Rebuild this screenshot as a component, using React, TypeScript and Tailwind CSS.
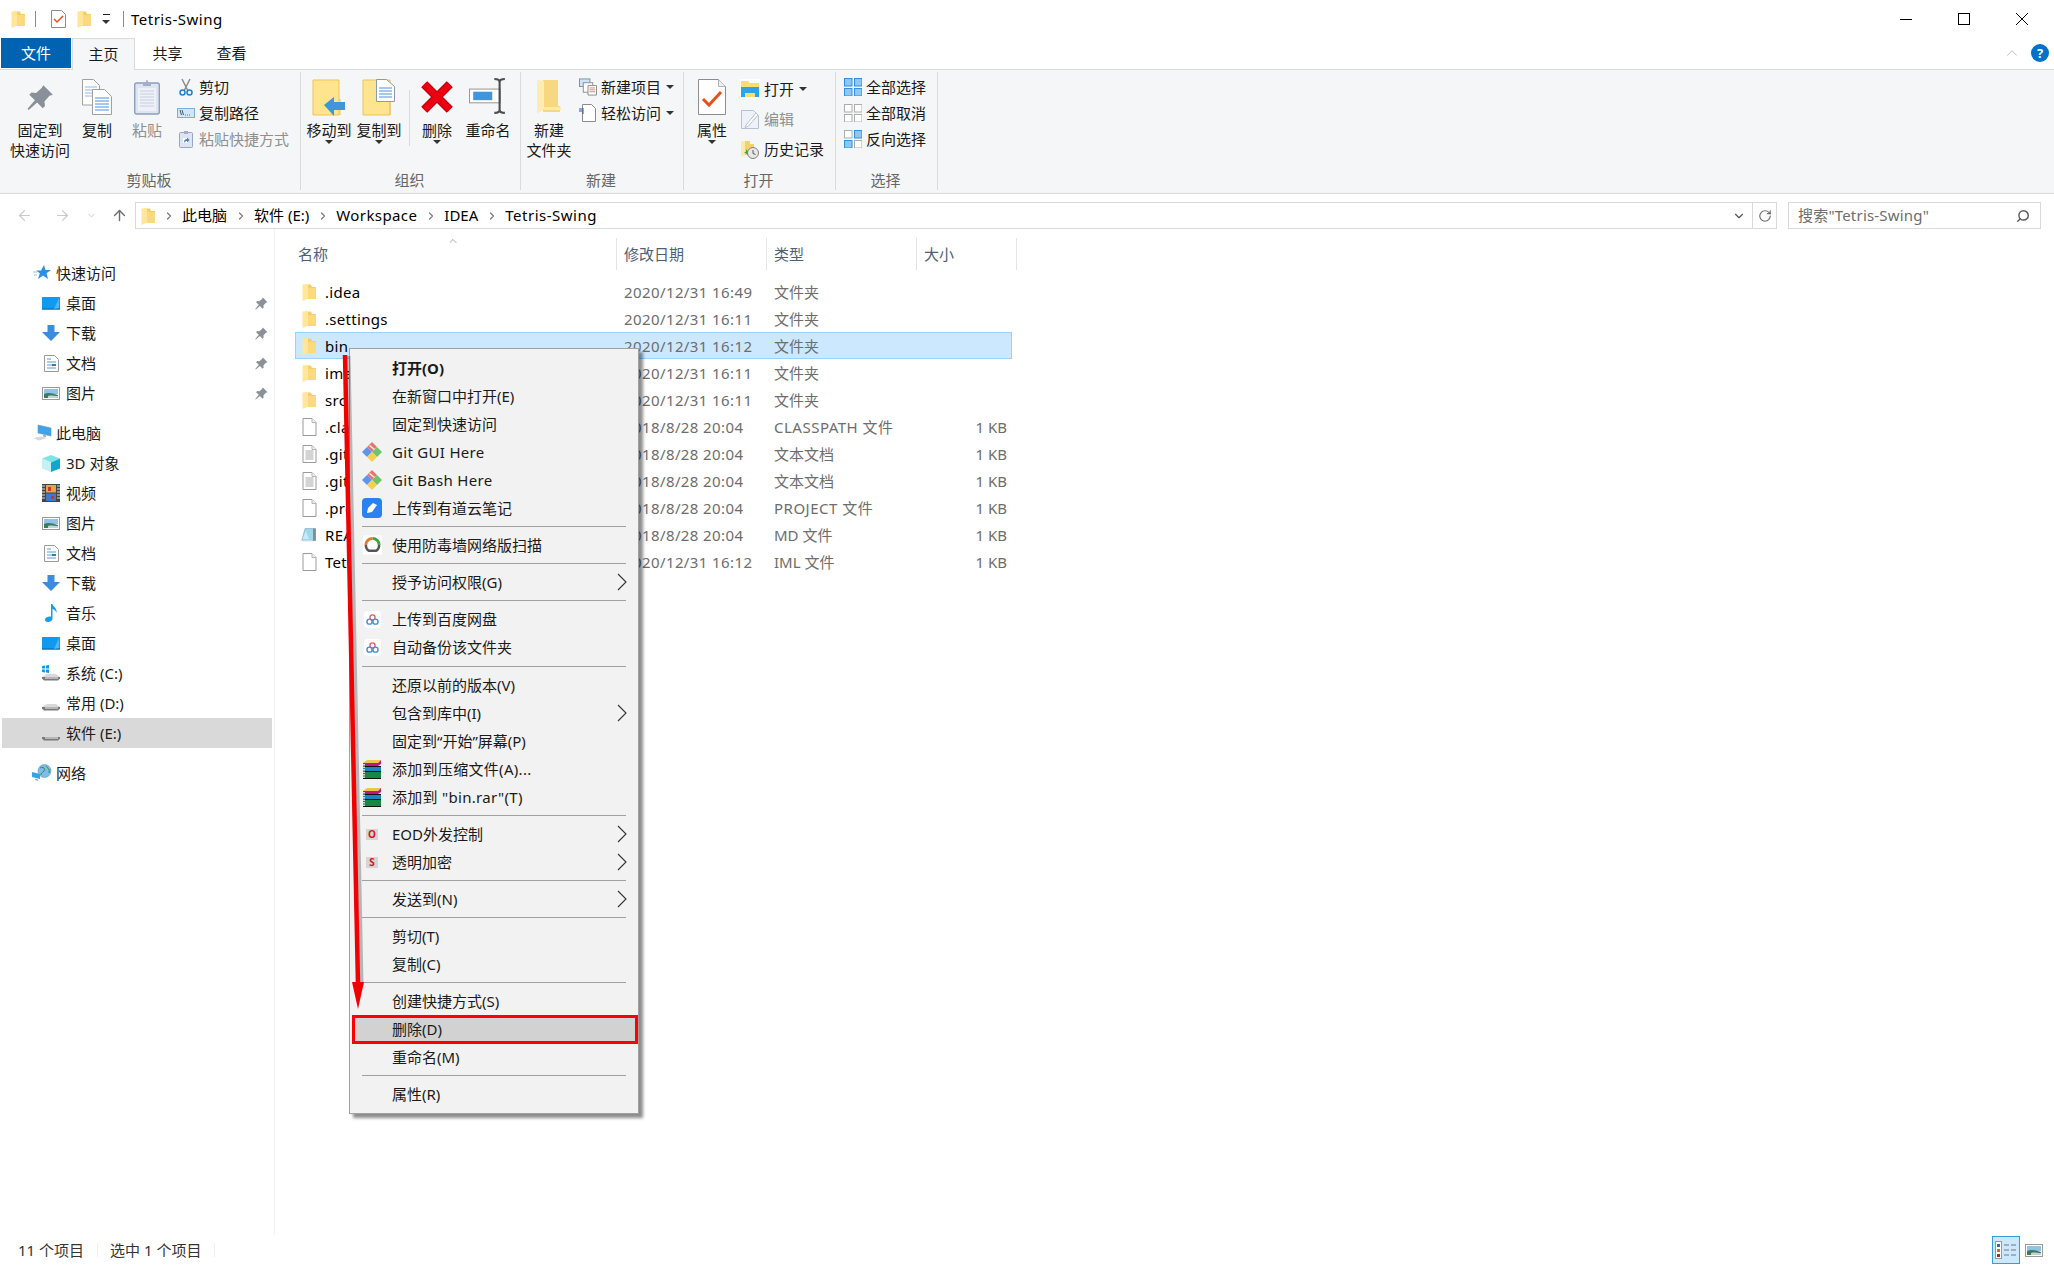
import { ChevronDown, ChevronRight, ChevronUp, RotateCw, ArrowLeft, ArrowRight, ArrowUp, Search } from "lucide-react";
import type { ReactNode } from "react";

// small shell icons, drawn by hand
function FolderS({ className = "w-[14px] h-[18px]" }: { className?: string }) {
  return (
    <svg viewBox="0 0 14 18" className={className}>
      <path d="M3 1.500h6l1 2.500h4v12H3z" fill="#f8cf66" />
      <path d="M.5 1.500 6 1v14.500l-5.500 2.500z" fill="#ffe69a" />
      <path d="M6 5h8v11H6z" fill="#fbd97e" />
    </svg>
  );
}
function DocBlank({ lines = false }: { lines?: boolean }) {
  return (
    <svg viewBox="0 0 14 18" className="w-[15px] h-[18px]">
      <path d="M.5.5h9l4 4v13H.5z" fill="#fff" stroke="#9a9a9a" />
      <path d="M9.5.5v4h4" fill="#f0f0f0" stroke="#b5b5b5" />
      {lines && <path d="M3 6h8M3 8h8M3 10h8M3 12h8M3 14h8" stroke="#a8a8a8" />}
    </svg>
  );
}
function NoteIcon() {
  return (
    <svg viewBox="0 0 20 18" className="w-[20px] h-[18px]">
      <path d="M5 1h13v15H1z" fill="#9ed8ea" stroke="#6f9db0" strokeWidth=".7" />
      <path d="M15 1h3.500v15H15z" fill="#7f8f99" />
      <path d="M1 15.500h13l1 1.500H2z" fill="#d5e9ef" />
      <path d="M6 4 2 14h8z" fill="#c8ecf5" />
    </svg>
  );
}
function Pin({ className = "w-[13px] h-[13px]", fill = "#8a9098" }: { className?: string; fill?: string }) {
  return (
    <svg viewBox="0 0 24 24" className={className}>
      <path d="M14.5 1 23 9.5l-3 1-4.5 5 .5 4-2 2-5-5-7.500 6.500-1-1L7 14.500l-5-5 2-2 4 .5 5-4.500z" fill={fill} />
    </svg>
  );
}
function Caret() {
  return (
    <svg viewBox="0 0 8 4" className="w-[8px] h-[4px]">
      <path d="M0 0h8L4 4z" fill="#333" />
    </svg>
  );
}
function CopyIcon() {
  return (
    <svg viewBox="0 0 30 36" className="w-[30px] h-[36px]">
      <path d="M.5.5h11l6 6V26H.5z" fill="#fff" stroke="#a0a0a0" />
      <path d="M3 8h12M3 11h12M3 14h12M3 17h12" stroke="#8fb8ea" />
      <path d="M10.500 10.500h12l7 7v18h-19z" fill="#fff" stroke="#a0a0a0" />
      <path d="M13 19h14M13 22h14M13 25h14M13 28h14M13 31h14" stroke="#4a90e2" />
    </svg>
  );
}
function PasteIcon() {
  return (
    <svg viewBox="0 0 26 36" className="w-[26px] h-[36px]">
      <rect x=".7" y="4" width="24.600" height="31" rx="2" fill="#dfe5f0" stroke="#8e9dbb" strokeWidth="1.400" />
      <path d="M4 9h18v23H4z" fill="#eef1f7" />
      <path d="M6 12h14M6 15h14M6 18h14M6 21h14M6 24h14M6 27h14" stroke="#c6cfe0" />
      <path d="M9 4h2.500l1-3h1l1 3H17v3H9z" fill="#a4afc6" />
    </svg>
  );
}
function ScissorsIcon() {
  return (
    <svg viewBox="0 0 14 18" className="w-[14px] h-[18px]">
      <path d="M3 1l5.500 11M11 1 5.500 12" stroke="#8c8c8c" strokeWidth="1.500" fill="none" />
      <circle cx="3.500" cy="14.500" r="2.500" fill="none" stroke="#2a7fc9" strokeWidth="1.500" />
      <circle cx="10.500" cy="14.500" r="2.500" fill="none" stroke="#2a7fc9" strokeWidth="1.500" />
    </svg>
  );
}
function PathIcon() {
  return (
    <svg viewBox="0 0 18 10" className="w-[18px] h-[10px]">
      <rect x=".5" y=".5" width="17" height="9" fill="#cfe6fb" stroke="#7aaee0" />
      <path d="M3 2l1.500 5M5 2l1.500 5M8 7h.8M10 7h.8M12 7h.8" stroke="#234" strokeWidth=".8" />
    </svg>
  );
}
function ShortcutIcon() {
  return (
    <svg viewBox="0 0 14 18" className="w-[14px] h-[18px]">
      <rect x=".5" y="2.500" width="13" height="15" rx="1" fill="#dfe5f0" stroke="#98a6c0" />
      <path d="M5 1h4v3H5z" fill="#a4afc6" />
      <path d="M4 8h5v5H4z" fill="#fff" />
      <path d="M5 13c0-3 1-4 3-4V7.500l2.500 2.500L8 12.500V11c-1 0-2 .5-3 2z" fill="#4a7fc0" />
    </svg>
  );
}
function MoveToIcon() {
  return (
    <svg viewBox="0 0 34 37" className="w-[34px] h-[37px]">
      <path d="M1 1h26v35H1z" fill="#ffe48f" stroke="#eec355" />
      <path d="M28 20v16" stroke="#eec355" />
      <path d="M12 26 22 18v5h11v8H22v6z" fill="#3f95de" />
    </svg>
  );
}
function CopyToIcon() {
  return (
    <svg viewBox="0 0 34 37" className="w-[34px] h-[37px]">
      <path d="M1 1h27v35H1z" fill="#ffe48f" stroke="#eec355" />
      <path d="M24 22c3 0 4 1 4 3v11" fill="none" stroke="#eec355" />
      <path d="M14.500.5h10l8 7v15h-18z" fill="#fff" stroke="#8a9aae" />
      <path d="M17 9h13M17 12h13M17 15h13M17 18h13" stroke="#4a90e2" />
    </svg>
  );
}
function DeleteIcon() {
  return (
    <svg viewBox="0 0 32 32" className="w-[34px] h-[34px]">
      <path d="M4 4 28 28M28 4 4 28" stroke="#b8000c" strokeWidth="8" />
      <path d="M4 4 28 28M28 4 4 28" stroke="#ea0011" strokeWidth="6" />
    </svg>
  );
}
function RenameIcon() {
  return (
    <svg viewBox="0 0 36 36" className="w-[38px] h-[38px]">
      <rect x=".5" y="10.500" width="29" height="13" fill="#fff" stroke="#9a9a9a" />
      <rect x="4" y="13" width="18" height="8" fill="#3f95de" />
      <path d="M24 1c4 0 5 2 5 3v26c0 1 1 3 5 3M34 1c-4 0-5 2-5 3M29 30c0 1-1 3-5 3" fill="none" stroke="#4d4d4d" strokeWidth="2" />
    </svg>
  );
}
function NewFolderIcon() {
  return (
    <svg viewBox="0 0 24 36" className="w-[24px] h-[36px]">
      <path d="M6 1h15v26h2v6H6z" fill="#f7d77f" />
      <path d="M0 1l7 1v28l-7 5z" fill="#ffecb0" />
      <path d="M7 28h17v3H7z" fill="#fde9a9" />
    </svg>
  );
}
function NewItemIcon() {
  return (
    <svg viewBox="0 0 19 18" className="w-[19px] h-[18px]">
      <rect x=".5" y=".5" width="11" height="8" fill="#cfe3f8" stroke="#7d8ea3" />
      <rect x="4.500" y="4.500" width="10" height="10" fill="#fff" stroke="#8a8a8a" />
      <path d="M9.500 7.500h9v10h-9z" fill="#fff" stroke="#8a8a8a" />
      <path d="M11 10h6M11 12h6M11 14h6" stroke="#c06a6a" strokeWidth=".8" />
    </svg>
  );
}
function EasyIcon() {
  return (
    <svg viewBox="0 0 18 18" className="w-[18px] h-[18px]">
      <path d="M3.500.5h9l4 4v13h-13z" fill="#fff" stroke="#8a8a8a" />
      <path d="M0 5h5M0 7h5M3 9h2" stroke="#1f5fa8" />
    </svg>
  );
}
function PropsIcon() {
  return (
    <svg viewBox="0 0 28 36" className="w-[28px] h-[36px]">
      <path d="M.5.5h20l7 7v28H.5z" fill="#fff" stroke="#8c8c8c" />
      <path d="M20.500.5v7h7" fill="#eee" stroke="#b0b0b0" />
      <path d="M5 20l6 6L23 13" fill="none" stroke="#e8501b" strokeWidth="3" />
    </svg>
  );
}
function OpenIcon() {
  return (
    <svg viewBox="0 0 20 20" className="w-[20px] h-[20px]">
      <rect width="20" height="20" fill="#fff" />
      <path d="M1 2h7l2 2h9v14H1z" fill="#ffdc6e" />
      <path d="M1 8h18v10h-4v-4H5v4H1z" fill="#2fa3ea" />
    </svg>
  );
}
function EditIcon() {
  return (
    <svg viewBox="0 0 18 19" className="w-[18px] h-[19px]">
      <path d="M.5.500h12l5 5v13H.5z" fill="#eef1f7" stroke="#b4c0d6" />
      <path d="M5 15 15 3l2 2L7 16.500l-3 1z" fill="#fff" stroke="#b4c0d6" />
    </svg>
  );
}
function HistoryIcon() {
  return (
    <svg viewBox="0 0 18 19" className="w-[18px] h-[19px]">
      <path d="M3 1h6v3h4v11H3z" fill="#f5d06f" />
      <path d="M0 1.500 4 1v14l-4 2z" fill="#ffe9a6" />
      <circle cx="12" cy="13" r="5.500" fill="#e8e8e8" stroke="#808080" />
      <path d="M12 10v3.500l2.500 1" stroke="#555" fill="none" />
      <path d="M5 9l2 3h-1l1 3-4-3h2z" fill="#3aa63a" />
    </svg>
  );
}
function GridIcon({ cells }: { cells: boolean[] }) {
  return (
    <svg viewBox="0 0 18 18" className="w-[18px] h-[18px]">
      {[[0, 0], [10, 0], [0, 10], [10, 10]].map(([x, y], i) => (
        <rect key={i} x={x + 0.5} y={y + 0.5} width="7.500" height="7.500" fill={cells[i] ? "#8ec8f2" : "#fff"} stroke={cells[i] ? "#2f8fe0" : "#adadad"} />
      ))}
    </svg>
  );
}
function StarIcon() {
  return (
    <svg viewBox="0 0 18 16" className="w-[18px] h-[16px]">
      <path d="M11 0l1.500 5H18l-4.500 3.200L15 14l-5-3.500L5 14l1.800-5.800L3 5.500h5z" fill="#2a8fe6" />
      <path d="M0 7h4M1 10h3" stroke="#9cc6ec" />
    </svg>
  );
}
function DesktopIcon() {
  return (
    <svg viewBox="0 0 18 13" className="w-[18px] h-[13px]">
      <rect width="18" height="12.500" rx=".5" fill="#0f9aef" />
      <path d="M0 11.500h18v1H0z" fill="#0d5fa8" />
      <path d="M12 12 17 1v10z" fill="#4db8f7" />
    </svg>
  );
}
function DownIcon() {
  return (
    <svg viewBox="0 0 18 16" className="w-[18px] h-[16px]">
      <path d="M5.500 0h7v7H18l-9 9-9-9h5.500z" fill="#3b8be0" />
    </svg>
  );
}
function DocsIcon() {
  return (
    <svg viewBox="0 0 15 17" className="w-[15px] h-[17px]">
      <path d="M.5.500h10l4 4v12H.5z" fill="#fff" stroke="#9a9a9a" />
      <path d="M3 4h4M3 7h9M3 10h9M3 13h9" stroke="#5a9ad6" />
      <path d="M8 9h4v2H8z" fill="#2f7f9f" />
    </svg>
  );
}
function PictureIcon({ className = "w-[18px] h-[13px]" }: { className?: string }) {
  return (
    <svg viewBox="0 0 18 13" className={className}>
      <rect x=".5" y=".5" width="17" height="12" fill="#fff" stroke="#9a9a9a" />
      <path d="M2 2h14v5H2z" fill="#8fc3ea" />
      <path d="M2 7c4-2 8-1 14 1v3H2z" fill="#3f7a5f" />
      <path d="M6 9c3-1 6 0 10 0v2H6z" fill="#bcd6d6" />
    </svg>
  );
}
function PcIcon() {
  return (
    <svg viewBox="0 0 20 18" className="w-[20px] h-[18px]">
      <path d="M6 1l13 3v8L6 9z" fill="#3ea3e8" stroke="#6a93b8" strokeWidth=".6" />
      <path d="M11 10.500l3 .8v2l-3-.8z" fill="#9ab4c8" />
      <path d="M1 14l8-1.500 6 1.500-8 2.500z" fill="#d6d9dc" />
    </svg>
  );
}
function CubeIcon() {
  return (
    <svg viewBox="0 0 18 17" className="w-[18px] h-[17px]">
      <path d="M9 0l9 3.500-9 4-9-4z" fill="#7fe3e6" />
      <path d="M0 3.500l9 4V17l-9-3.500z" fill="#c6f1f2" />
      <path d="M18 3.500l-9 4V17l9-3.500z" fill="#14a5cf" />
    </svg>
  );
}
function FilmIcon() {
  return (
    <svg viewBox="0 0 18 18" className="w-[18px] h-[18px]">
      <rect width="18" height="18" fill="#444" />
      <path d="M0 2h3M0 5h3M0 8h3M0 11h3M0 14h3M15 2h3M15 5h3M15 8h3M15 11h3M15 14h3" stroke="#ddd" />
      <path d="M4 1h10v7.500H4z" fill="#e6a34a" />
      <path d="M4 9.500h10V17H4z" fill="#3b78d8" />
      <path d="M6 3h3v4H6zM9 12h3v3H9z" fill="#c0392b" />
    </svg>
  );
}
function NoteMusic() {
  return (
    <svg viewBox="0 0 13 18" className="w-[13px] h-[18px]">
      <path d="M6 0h1.500c.5 3 5 4 4 9-.5-2-2-3.500-4-4v9.500C7.500 16.500 5.500 18 3 18s-3-1.500-3-2.500C0 13.500 3 12 6 12.500z" fill="#12a0ee" />
    </svg>
  );
}
function DriveIcon({ win = false }: { win?: boolean }) {
  return (
    <svg viewBox="0 0 20 16" className="w-[20px] h-[16px]">
      <path d="M1 12l5-3h9l4 3-2 3H3z" fill="#d9d9d9" />
      <path d="M1 12h18v1.500L17 15.500H3l-2-2z" fill="#7a7a7a" />
      <path d="M4 12.500h13v1H4z" fill="#f3f3f3" />
      {win && <path d="M1 1l3-.5v3H1zM5 .4l3-.4v3.500H5zM1 4.500h3v3l-3-.5zM5 4.500h3V8l-3-.4z" fill="#0f9aef" />}
    </svg>
  );
}
function NetIcon() {
  return (
    <svg viewBox="0 0 20 18" className="w-[20px] h-[18px]">
      <circle cx="12.500" cy="7" r="6.500" fill="#7fbde8" stroke="#5e96c4" strokeWidth=".6" />
      <path d="M8 4c3-2 6 1 4 3s-3 2-3 4M14 2c2 2 4 4 3 7" stroke="#2e8b57" fill="none" />
      <path d="M0 8l8 2v5l-8-2z" fill="#36a3e8" />
      <path d="M3 14.500l3 1v1.500l-3-1z" fill="#98b0c4" />
    </svg>
  );
}
function GitIcon() {
  return (
    <svg viewBox="0 0 20 20" className="w-[20px] h-[20px]">
      <path d="M10 0l5 5-5 5-5-5z" fill="#e8746c" />
      <path d="M5 5l5 5-5 5-5-5z" fill="#5b95ec" />
      <path d="M15 5l5 5-5 5-5-5z" fill="#6cc56c" />
      <path d="M10 10l5 5-5 5-5-5z" fill="#f5d050" />
      <path d="M8 3l5 4-1 1-5-4z" fill="#eee" />
    </svg>
  );
}
function YoudaoIcon() {
  return (
    <svg viewBox="0 0 20 20" className="w-[20px] h-[20px]">
      <rect width="20" height="20" rx="4" fill="#2b80f2" />
      <path d="M11 5l4 2-5 7-5 1 1-5z" fill="#fff" />
    </svg>
  );
}
function AvIcon() {
  return (
    <svg viewBox="0 0 20 20" className="w-[19px] h-[20px]">
      <rect width="20" height="20" fill="#fff" />
      <path d="M10 3a7 7 0 0 1 7 7" fill="none" stroke="#3aa63a" strokeWidth="3" />
      <path d="M3 10a7 7 0 0 1 7-7" fill="none" stroke="#e87a2a" strokeWidth="3" />
      <path d="M3 10a7 7 0 0 0 3 6h8a7 7 0 0 0 3-6" fill="none" stroke="#555" strokeWidth="2.500" />
    </svg>
  );
}
function BaiduIcon() {
  return (
    <svg viewBox="0 0 20 20" className="w-[17px] h-[17px]">
      <rect width="20" height="20" rx="4" fill="#fff" />
      <circle cx="10" cy="7.500" r="3" fill="none" stroke="#e0606a" strokeWidth="1.600" />
      <circle cx="6.500" cy="12.500" r="3" fill="none" stroke="#3a8ee8" strokeWidth="1.600" />
      <circle cx="13.500" cy="12.500" r="3" fill="none" stroke="#3a8ee8" strokeWidth="1.600" />
    </svg>
  );
}
function RarIcon() {
  return (
    <svg viewBox="0 0 20 20" className="w-[20px] h-[20px]">
      <path d="M1 4l4-3h14l-3 3z" fill="#e6c84a" />
      <path d="M1 4h15l3-3v4l-3 2H1z" fill="#c2148a" />
      <path d="M1 8h18v4H1z" fill="#1a86bd" />
      <path d="M1 13h18v6H1z" fill="#138a44" />
      <path d="M1 7.500h18M1 12.500h18M1 19.500h18" stroke="#111" />
      <path d="M2 5v14" stroke="#d4d4d4" strokeWidth="2" strokeDasharray="1.500 1" />
    </svg>
  );
}
function LetterIcon({ c }: { c: string }) {
  return <span className="flex h-[11px] w-[12px] items-center justify-center bg-[#d5d5d5] text-[10px] font-bold leading-none text-[#d8141b]">{c}</span>;
}
function SubArrow() {
  return (
    <svg viewBox="0 0 10 18" className="ml-auto mr-[6px] h-[18px] w-[10px]">
      <path d="M1 1l8 8-8 8" fill="none" stroke="#333" strokeWidth="1.100" />
    </svg>
  );
}

function Big({ w, ml = 0, gray, caret, icon, lines }: { w: number; ml?: number; gray?: boolean; caret?: boolean; icon: ReactNode; lines: string[] }) {
  return (
    <div className={"flex shrink-0 flex-col items-center leading-[20px] " + (gray ? "text-[#8f8f8f]" : "text-[#1a1a1a]")} style={{ width: w, marginLeft: ml }}>
      <div className="flex h-[46px] items-center justify-center">{icon}</div>
      {lines.map((l) => (
        <span key={l} className="whitespace-nowrap">{l}</span>
      ))}
      {caret && <span className="flex h-[4px] items-center"><Caret /></span>}
    </div>
  );
}
function Small({ icon, label, gray, caret, h = "h-[26px]", iw = "w-[18px]" }: { icon: ReactNode; label: string; gray?: boolean; caret?: boolean; h?: string; iw?: string }) {
  return (
    <div className={"flex items-center gap-[4px] whitespace-nowrap " + h + " " + (gray ? "text-[#8f8f8f]" : "text-[#1a1a1a]")}>
      <span className={"flex justify-center " + iw}>{icon}</span>
      <span>{label}</span>
      {caret && <span className="ml-[1px]"><Caret /></span>}
    </div>
  );
}
function Group({ width, label, children }: { width: number; label: string; children: ReactNode }) {
  return (
    <div className="flex h-[118px] shrink-0 flex-col border-r border-[#dadbdc] pt-[2px]" style={{ width }}>
      <div className="flex h-[96px]">{children}</div>
      <div className="flex h-[19px] items-center justify-center pr-[2px] text-[#666]">{label}</div>
    </div>
  );
}

const nav: { label: string; icon?: ReactNode; head?: boolean; pin?: boolean; active?: boolean; gap?: boolean }[] = [
  { label: "快速访问", icon: <StarIcon />, head: true },
  { label: "桌面", icon: <DesktopIcon />, pin: true },
  { label: "下载", icon: <DownIcon />, pin: true },
  { label: "文档", icon: <DocsIcon />, pin: true },
  { label: "图片", icon: <PictureIcon />, pin: true },
  { label: "此电脑", icon: <PcIcon />, head: true, gap: true },
  { label: "3D 对象", icon: <CubeIcon /> },
  { label: "视频", icon: <FilmIcon /> },
  { label: "图片", icon: <PictureIcon /> },
  { label: "文档", icon: <DocsIcon /> },
  { label: "下载", icon: <DownIcon /> },
  { label: "音乐", icon: <NoteMusic /> },
  { label: "桌面", icon: <DesktopIcon /> },
  { label: "系统 (C:)", icon: <DriveIcon win /> },
  { label: "常用 (D:)", icon: <DriveIcon /> },
  { label: "软件 (E:)", icon: <DriveIcon />, active: true },
  { label: "网络", icon: <NetIcon />, head: true, gap: true },
];

const files = [
  { name: ".idea", date: "2020/12/31 16:49", type: "文件夹", icon: <FolderS /> },
  { name: ".settings", date: "2020/12/31 16:11", type: "文件夹", icon: <FolderS /> },
  { name: "bin", date: "2020/12/31 16:12", type: "文件夹", icon: <FolderS />, sel: true },
  { name: "images", date: "2020/12/31 16:11", type: "文件夹", icon: <FolderS /> },
  { name: "src", date: "2020/12/31 16:11", type: "文件夹", icon: <FolderS /> },
  { name: ".classpath", date: "2018/8/28 20:04", type: "CLASSPATH 文件", size: "1 KB", icon: <DocBlank />, wide: true },
  { name: ".gitattributes", date: "2018/8/28 20:04", type: "文本文档", size: "1 KB", icon: <DocBlank lines /> },
  { name: ".gitignore", date: "2018/8/28 20:04", type: "文本文档", size: "1 KB", icon: <DocBlank lines /> },
  { name: ".project", date: "2018/8/28 20:04", type: "PROJECT 文件", size: "1 KB", icon: <DocBlank />, wide: true },
  { name: "README.md", date: "2018/8/28 20:04", type: "MD 文件", size: "1 KB", icon: <NoteIcon /> },
  { name: "Tetris-Swing.iml", date: "2020/12/31 16:12", type: "IML 文件", size: "1 KB", icon: <DocBlank /> },
];

type MenuRow = { label?: string; icon?: ReactNode; sub?: boolean; bold?: boolean; hot?: boolean; wide?: boolean; tall?: boolean };
const menu: MenuRow[] = [
  { label: "打开(O)", bold: true },
  { label: "在新窗口中打开(E)" },
  { label: "固定到快速访问" },
  { label: "Git GUI Here", icon: <GitIcon />, wide: true },
  { label: "Git Bash Here", icon: <GitIcon />, wide: true },
  { label: "上传到有道云笔记", icon: <YoudaoIcon /> },
  {},
  { label: "使用防毒墙网络版扫描", icon: <AvIcon /> },
  {},
  { label: "授予访问权限(G)", sub: true },
  {},
  { label: "上传到百度网盘", icon: <BaiduIcon /> },
  { label: "自动备份该文件夹", icon: <BaiduIcon /> },
  { tall: true },
  { label: "还原以前的版本(V)" },
  { label: "包含到库中(I)", sub: true },
  { label: "固定到“开始”屏幕(P)" },
  { label: "添加到压缩文件(A)...", icon: <RarIcon />, wide: true },
  { label: "添加到 \"bin.rar\"(T)", icon: <RarIcon />, wide: true },
  {},
  { label: "EOD外发控制", icon: <LetterIcon c="O" />, sub: true },
  { label: "透明加密", icon: <LetterIcon c="S" />, sub: true },
  {},
  { label: "发送到(N)", sub: true },
  {},
  { label: "剪切(T)" },
  { label: "复制(C)" },
  {},
  { label: "创建快捷方式(S)" },
  { label: "删除(D)", hot: true },
  { label: "重命名(M)" },
  {},
  { label: "属性(R)" },
];

function Crumb({ label, track = "" }: { label: string; track?: string }) {
  return (
    <>
      <ChevronRight className="ml-2 h-[12px] w-[12px] shrink-0 text-[#7d7d7d]" strokeWidth={2.5} />
      <span className={"ml-[7px] mb-[2px] whitespace-nowrap text-black " + track}>{label}</span>
    </>
  );
}

export default function App() {
  return (
    <div className="relative flex h-[1265px] w-[2054px] flex-col overflow-hidden bg-white font-['Noto_Sans','Noto_Sans_CJK_SC',sans-serif] text-[15px] leading-[20px] text-black">
      {/* title bar */}
      <div className="flex h-[38px] shrink-0 items-center">
        <span className="ml-[11px] flex"><FolderS className="h-[18px] w-[14px]" /></span>
        <span className="ml-[10px] h-[16px] w-px bg-[#8a8a8a]" />
        <svg viewBox="0 0 15 18" className="ml-[15px] h-[18px] w-[15px]">
          <path d="M.5.500h10l4 4v13H.5z" fill="#fff" stroke="#8c8c8c" />
          <path d="M3 9l3 3 6-6" fill="none" stroke="#e8501b" strokeWidth="1.500" />
        </svg>
        <span className="ml-[11px] flex"><FolderS className="h-[18px] w-[14px]" /></span>
        <span className="ml-[11px] flex h-[10px] flex-col items-center justify-between">
          <span className="h-px w-[7px] bg-[#222]" />
          <Caret />
        </span>
        <span className="ml-[13px] h-[16px] w-px bg-[#8a8a8a]" />
        <span className="ml-[7px] text-[15px] tracking-[0.5px]">Tetris-Swing</span>
        <div className="ml-auto mr-[26px] flex items-center gap-[46px]">
          <span className="h-px w-[12px] bg-black" />
          <span className="h-[12px] w-[12px] border border-black" />
          <svg viewBox="0 0 12 12" className="h-[12px] w-[12px]"><path d="M0 0l12 12M12 0 0 12" stroke="#000" /></svg>
        </div>
      </div>

      {/* tabs */}
      <div className="flex h-[32px] shrink-0 items-stretch border-b border-[#dadbdc] pl-px">
        <div className="flex h-[30px] w-[70px] items-center justify-center bg-[#0063b1] text-white">文件</div>
        <div className="z-10 ml-px flex h-[32px] w-[63px] items-center justify-center border-x border-t border-[#dadbdc] bg-[#f5f6f7] pb-[2px] text-[#1a1a1a]">主页</div>
        <div className="ml-[-1px] flex w-[67px] items-center justify-center pb-[2px] text-[#1a1a1a]">共享</div>
        <div className="ml-[-2px] flex w-[65px] items-center justify-center pb-[2px] text-[#1a1a1a]">查看</div>
        <div className="ml-auto mr-[5px] flex items-center gap-[10px] pb-[2px]">
          <ChevronUp className="h-[18px] w-[18px] text-[#b8b8b8]" strokeWidth={1.2} />
          <span className="flex h-[18px] w-[18px] items-center justify-center rounded-full bg-[#0072c9] text-[13px] font-bold text-white">?</span>
        </div>
      </div>

      {/* ribbon */}
      <div className="flex h-[124px] shrink-0 border-b border-[#dadbdc] bg-[#f5f6f7] pt-[2px]">
        <Group width={301} label="剪贴板">
          <Big w={80} icon={<Pin className="h-[27px] w-[27px]" />} lines={["固定到", "快速访问"]} />
          <Big w={34} icon={<CopyIcon />} lines={["复制"]} />
          <Big w={34} ml={16} gray icon={<PasteIcon />} lines={["粘贴"]} />
          <div className="ml-[13px] flex flex-col">
            <Small icon={<ScissorsIcon />} label="剪切" />
            <Small icon={<PathIcon />} label="复制路径" />
            <Small gray icon={<ShortcutIcon />} label="粘贴快捷方式" />
          </div>
        </Group>
        <Group width={220} label="组织">
          <Big w={46} ml={5} caret icon={<MoveToIcon />} lines={["移动到"]} />
          <Big w={46} ml={4} caret icon={<CopyToIcon />} lines={["复制到"]} />
          <span className="ml-[7px] mt-[16px] h-[56px] w-px bg-[#dadbdc]" />
          <Big w={34} ml={10} caret icon={<DeleteIcon />} lines={["删除"]} />
          <Big w={46} ml={11} icon={<RenameIcon />} lines={["重命名"]} />
        </Group>
        <Group width={163} label="新建">
          <Big w={46} ml={5} icon={<NewFolderIcon />} lines={["新建", "文件夹"]} />
          <div className="ml-[7px] flex flex-col">
            <Small caret icon={<NewItemIcon />} label="新建项目" iw="w-[18px]" />
            <Small caret icon={<EasyIcon />} label="轻松访问" iw="w-[18px]" />
          </div>
        </Group>
        <Group width={152} label="打开">
          <Big w={36} ml={10} caret icon={<PropsIcon />} lines={["属性"]} />
          <div className="ml-[10px] flex flex-col">
            <Small caret h="h-[30px]" iw="w-[20px]" icon={<OpenIcon />} label="打开" />
            <Small gray h="h-[30px]" iw="w-[20px]" icon={<EditIcon />} label="编辑" />
            <Small h="h-[30px]" iw="w-[20px]" icon={<HistoryIcon />} label="历史记录" />
          </div>
        </Group>
        <Group width={102} label="选择">
          <div className="ml-[8px] flex flex-col">
            <Small icon={<GridIcon cells={[true, true, true, true]} />} label="全部选择" />
            <Small icon={<GridIcon cells={[false, false, false, false]} />} label="全部取消" />
            <Small icon={<GridIcon cells={[false, true, true, false]} />} label="反向选择" />
          </div>
        </Group>
      </div>

      {/* address bar */}
      <div className="flex h-[35px] shrink-0 items-end">
        <div className="flex h-[27px] w-[135px] items-center text-[#c9c9c9]">
          <ArrowLeft className="ml-[16px] h-[17px] w-[17px]" strokeWidth={1.6} />
          <ArrowRight className="ml-[21px] h-[17px] w-[17px]" strokeWidth={1.6} />
          <ChevronDown className="ml-[15px] h-[11px] w-[11px]" strokeWidth={2} />
          <ArrowUp className="ml-[14px] h-[17px] w-[17px] text-[#6e6e6e]" strokeWidth={2} />
        </div>
        <div className="flex h-[27px] w-[1642px] items-center border border-[#d9d9d9]">
          <span className="ml-[5px] flex"><FolderS className="h-[18px] w-[14px]" /></span>
          <Crumb label="此电脑" />
          <Crumb label="软件 (E:)" />
          <Crumb label="Workspace" track="tracking-[0.4px]" />
          <Crumb label="IDEA" />
          <Crumb label="Tetris-Swing" track="tracking-[0.5px]" />
          <ChevronDown className="ml-auto mr-[6px] h-[14px] w-[14px] text-[#555]" strokeWidth={2} />
          <span className="flex h-full w-[24px] items-center justify-center border-l border-[#d9d9d9]">
            <RotateCw className="h-[14px] w-[14px] text-[#6e6e6e]" strokeWidth={2} />
          </span>
        </div>
        <div className="ml-[11px] flex h-[27px] w-[253px] items-center justify-between border border-[#d9d9d9] pl-[9px] pr-[10px] text-[#6d6d6d]">
          <span className="mb-[2px] tracking-[0.2px]">搜索"Tetris-Swing"</span>
          <Search className="h-[14px] w-[14px] -scale-x-100 text-[#5a5a5a]" strokeWidth={2.5} />
        </div>
      </div>

      {/* body */}
      <div className="flex min-h-0 flex-1">
        <div className="w-[274px] shrink-0 pt-[29px]">
          {nav.map((n, i) => (
            <div
              key={i}
              className={
                "ml-[2px] flex h-[30px] w-[270px] items-center text-[#1a1a1a] " +
                (n.active ? "bg-[#d9d9d9] " : "") +
                (n.gap ? "mt-[10px] " : "") +
                (n.head ? "pl-[30px]" : "pl-[39px]")
              }
            >
              <span className="flex w-[20px] shrink-0 justify-center">{n.icon}</span>
              <span className={n.head ? "ml-[4px]" : "ml-[5px]"}>{n.label}</span>
              {n.pin && <span className="ml-auto mr-[4px] flex"><Pin /></span>}
            </div>
          ))}
        </div>
        <div className="relative flex flex-1 flex-col border-l border-[#f0f0f0]">
          <ChevronUp className="absolute left-[172px] top-[6px] h-[12px] w-[12px] text-[#8a8a8a]" strokeWidth={1.5} />
          <div className="mt-[9px] grid h-[32px] w-[742px] grid-cols-[342px_150px_150px_100px] text-[#4c607a]">
            <div className="flex items-center border-r border-[#e5e5e5] pl-[23px]">名称</div>
            <div className="flex items-center border-r border-[#e5e5e5] pl-[7px]">修改日期</div>
            <div className="flex items-center border-r border-[#e5e5e5] pl-[7px]">类型</div>
            <div className="flex items-center border-r border-[#e5e5e5] pl-[7px]">大小</div>
          </div>
          <div className="ml-[20px] mt-[8px] w-[717px]">
            {files.map((f) => (
              <div key={f.name} className={"grid h-[27px] grid-cols-[328px_149px_150px_1fr] items-center border " + (f.sel ? "border-[#99d1ff] bg-[#cce8ff]" : "border-transparent")}>
                <div className="flex items-center">
                  <span className="ml-[5px] flex w-[16px] justify-center">{f.icon}</span>
                  <span className="ml-[8px] tracking-[0.3px]">{f.name}</span>
                </div>
                <span className="whitespace-nowrap tracking-[0.4px] text-[#6d6d6d]">{f.date}</span>
                <span className={"ml-px whitespace-nowrap text-[#6d6d6d] " + (f.wide ? "tracking-[0.5px]" : "")}>{f.type}</span>
                <span className="pr-[4px] text-right text-[#6d6d6d]">{f.size}</span>
              </div>
            ))}
          </div>
        </div>
      </div>

      {/* status bar */}
      <div className="flex h-[30px] shrink-0 items-center text-[#333]">
        <span className="ml-[18px] w-[79px]">11 个项目</span>
        <span className="h-[14px] w-px bg-[#f0f0f0]" />
        <span className="ml-[12px] w-[104px]">选中 1 个项目</span>
        <span className="h-[14px] w-px bg-[#f0f0f0]" />
        <div className="ml-auto mr-[11px] flex items-center gap-[5px]">
          <span className="flex h-[28px] w-[28px] items-center justify-center border border-[#3a9bdc] bg-[#cce8ff]">
            <svg viewBox="0 0 22 18" className="h-[18px] w-[22px]">
              <rect x=".5" y=".5" width="6" height="17" fill="#fff" stroke="#9a9a9a" />
              <path d="M2 3h3v3H2z" fill="#2f6fa8" />
              <path d="M2 8h3v3H2z" fill="#c07030" />
              <path d="M2 13h3v3H2z" fill="#c0201c" />
              <path d="M9 4h5M16 4h5M9 9h5M16 9h5M9 14h5M16 14h5" stroke="#777" />
            </svg>
          </span>
          <PictureIcon />
        </div>
      </div>

      {/* context menu */}
      <div className="absolute left-[349px] top-[348px] w-[290px] border border-[#a0a0a0] bg-[#f2f2f2] py-[5px] text-[#1a1a1a] shadow-[4px_4px_3px_rgba(0,0,0,0.45)]">
        {menu.map((m, i) =>
          m.label ? (
            <div key={i} className={"relative flex items-center " + (m.hot ? "z-10 mb-[-1px] ml-[2px] mr-0 h-[29px] border-[3px] border-[#ff0000] bg-[#d2d2d2] pb-[1px]" : "mx-[2px] h-[28px] border-[3px] border-transparent")}>
              <span className="ml-[6px] flex w-[22px] shrink-0 justify-center">{m.icon}</span>
              <span className={"ml-[9px] whitespace-nowrap " + (m.bold ? "font-bold " : "") + (m.wide ? "tracking-[0.3px]" : "")}>{m.label}</span>
              {m.sub && <SubArrow />}
            </div>
          ) : (
            <div key={i} className={"flex items-center px-[12px] " + (m.tall ? "h-[10px]" : "h-[9px]")}>
              <span className="h-px w-full bg-[#a0a0a0]" />
            </div>
          )
        )}
      </div>

      {/* red arrow over the shot */}
      <svg className="absolute left-0 top-0 h-[1265px] w-[2054px]" viewBox="0 0 2054 1265" fill="none">
        <path d="M348 356 361 985" stroke="#000" strokeOpacity=".25" strokeWidth="5" />
        <path d="M345 355 358 985" stroke="#f00000" strokeWidth="4.500" />
        <path d="M352 982 364 982 358 1009z" fill="#f00000" />
      </svg>
    </div>
  );
}
